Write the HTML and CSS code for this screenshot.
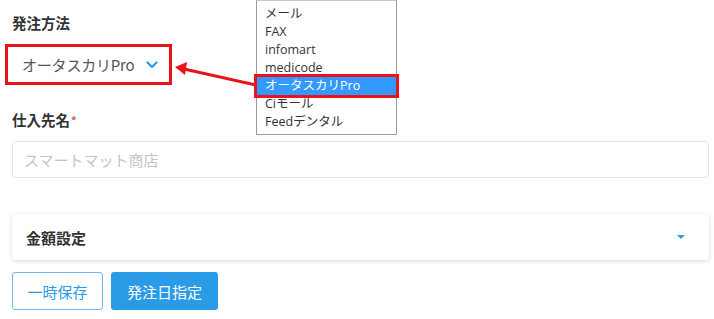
FILE: index.html
```html
<!DOCTYPE html>
<html lang="ja">
<head>
    <meta charset="UTF-8">
    <title>発注方法</title>
    <link rel="stylesheet" href="styles.css">
</head>
<body>
    <div class="form">
        <div class="label">発注方法</div>
        <div class="select-box">
            <span class="select-value">オータスカリPro</span>
            <svg class="chevron" width="12" height="8" viewBox="0 0 12 8"><path d="M1.5 1.5 L6 6 L10.5 1.5" fill="none" stroke="#2a9be6" stroke-width="2.2" stroke-linecap="round" stroke-linejoin="round"/></svg>
        </div>

        <div class="label label-gap">仕入先名<span class="req">*</span></div>
        <div class="input">スマートマット商店</div>

        <div class="card">
            <span class="card-title">金額設定</span>
            <span class="caret"></span>
        </div>

        <div class="buttons">
            <button class="btn btn-outline">一時保存</button>
            <button class="btn btn-fill">発注日指定</button>
        </div>
    </div>

    <ul class="dropdown">
        <li>メール</li>
        <li>FAX</li>
        <li>infomart</li>
        <li>medicode</li>
        <li class="active">オータスカリPro</li>
        <li>Ciモール</li>
        <li>Feedデンタル</li>
    </ul>

    <svg class="pointer" width="714" height="319" viewBox="0 0 714 319">
        <line x1="256" y1="85" x2="184" y2="69" stroke="#e8141b" stroke-width="3"/>
        <polygon points="175,67 187,62 185,75" fill="#e8141b"/>
    </svg>
</body>
</html>
```

FILE: styles.css
```css
* {
    box-sizing: border-box;
    margin: 0;
    padding: 0;
}

body {
    width: 714px;
    height: 319px;
    background-color: #fff;
    font-family: "Noto Sans CJK JP", "Noto Sans", sans-serif;
    color: #333;
    position: relative;
    overflow: hidden;
}

.form {
    padding: 14px 5px 0 12px;
}

.label {
    font-size: 14.5px;
    line-height: 18px;
    font-weight: bold;
    color: #333;
}

.label-gap {
    margin-top: 26px;
}

.req {
    color: #e0505a;
    font-size: 11px;
    vertical-align: top;
    margin-left: 1px;
}

/* select with red annotation frame */
.select-box {
    display: flex;
    align-items: center;
    width: 167px;
    height: 41px;
    margin-top: 12px;
    margin-left: -7px;
    padding-left: 14px;
    border: 3px solid #e8141b;
    font-size: 15px;
    color: #555;
}

.select-value {
    letter-spacing: -0.2px;
}

.chevron {
    margin-left: 12px;
}

.input {
    margin-top: 12px;
    width: 697px;
    height: 37px;
    border: 1px solid #e3e3e3;
    border-radius: 4px;
    padding-left: 11px;
    display: flex;
    align-items: center;
    font-size: 15px;
    color: #c4c4c4;
}

.card {
    margin-top: 36px;
    width: 697px;
    height: 46px;
    border-radius: 4px;
    box-shadow: 0 1px 4px rgba(0, 0, 0, 0.16);
    display: flex;
    align-items: center;
    justify-content: space-between;
    padding: 0 24px 0 14px;
}

.card-title {
    font-size: 15px;
    font-weight: bold;
    color: #333;
}

.caret {
    width: 0;
    height: 0;
    border-left: 4px solid transparent;
    border-right: 4px solid transparent;
    border-top: 4px solid #2a9be6;
}

.buttons {
    display: flex;
    gap: 8px;
    margin-top: 12px;
}

.btn {
    height: 38px;
    border-radius: 3px;
    font-family: "Noto Sans CJK JP", sans-serif;
    font-size: 15px;
    cursor: pointer;
}

.btn-outline {
    width: 91px;
    background-color: #fff;
    border: 1px solid #6fb8ec;
    color: #2a9be6;
}

.btn-fill {
    width: 107px;
    background-color: #2a9be6;
    border: none;
    color: #fff;
}

/* opened native list */
.dropdown {
    position: absolute;
    left: 256px;
    top: 0;
    width: 141px;
    height: 135px;
    border: 1px solid #9a9a9a;
    border-top-color: #c8c8c8;
    background-color: #fff;
    list-style: none;
    padding-top: 4px;
    font-family: "Open Sans", "Noto Sans CJK JP", sans-serif;
    font-size: 12.5px;
    color: #333;
}

.dropdown li {
    height: 18px;
    line-height: 18px;
    padding-left: 8px;
}

.dropdown .active {
    background-color: #3399ff;
    color: #fff;
    box-shadow: 0 0 0 3px #e8141b;
    position: relative;
}

.pointer {
    position: absolute;
    left: 0;
    top: 0;
    pointer-events: none;
}
```
